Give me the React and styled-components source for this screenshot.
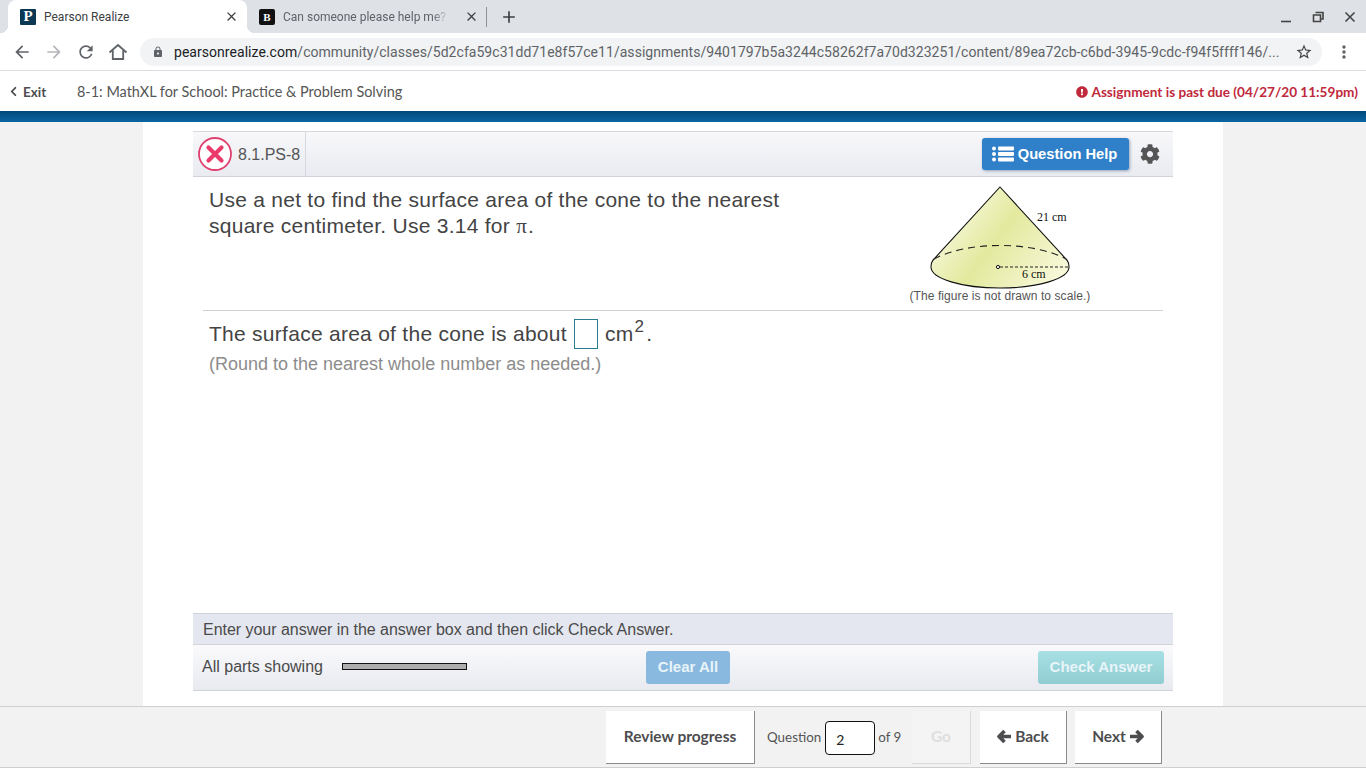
import React from 'react';
import styled, { createGlobalStyle } from 'styled-components';
import { FaChevronLeft, FaExclamationCircle, FaCog } from 'react-icons/fa';
import { MdArrowBack, MdArrowForward, MdRefresh, MdLock, MdStarBorder, MdMoreVert, MdClose, MdAdd } from 'react-icons/md';

const GlobalStyle = createGlobalStyle`
  html, body { margin: 0; padding: 0; height: 100%; overflow: hidden; }
  body { font-family: "Liberation Sans", Arial, sans-serif; background: #f2f2f2; }
  * { box-sizing: border-box; }
`;

const Page = styled.div`
  width: 1366px;
  height: 768px;
  display: flex;
  flex-direction: column;
  overflow: hidden;
`;

// Browser chrome
const TabStrip = styled.div`
  height: 33px;
  background: #dee1e6;
  display: flex;
  align-items: center;
  padding-left: 8px;
`;

const ActiveTab = styled.div`
  width: 239px;
  height: 33px;
  background: #fff;
  border-radius: 8px 8px 0 0;
  display: flex;
  align-items: center;
  padding: 0 8px 0 12px;
  font: 12px Roboto, sans-serif;
  color: #3c4043;
  position: relative;

  &::before, &::after {
    content: '';
    position: absolute;
    bottom: 0;
    width: 8px;
    height: 8px;
  }
  &::before {
    left: -8px;
    background: radial-gradient(circle at 0 0, transparent 8px, #fff 8.5px);
  }
  &::after {
    right: -8px;
    background: radial-gradient(circle at 100% 0, transparent 8px, #fff 8.5px);
  }
`;

const InactiveTab = styled.div`
  width: 239px;
  height: 33px;
  display: flex;
  align-items: center;
  padding: 0 7px 0 12px;
  font: 12px Roboto, sans-serif;
  color: #5f6368;
`;

const Favicon = styled.span`
  width: 16px;
  height: 16px;
  flex: none;
  margin-right: 8px;
  background: ${(p) => p.$bg};
  color: #fff;
  font: bold ${(p) => p.$size}px "Liberation Serif", serif;
  display: flex;
  align-items: center;
  justify-content: center;
  border-radius: ${(p) => p.$radius}px;
`;

const TabTitle = styled.span`
  flex: 1;
  white-space: nowrap;
  ${(p) => p.$fade && `
    -webkit-mask-image: linear-gradient(to right, #000 150px, transparent 166px);
    mask-image: linear-gradient(to right, #000 150px, transparent 166px);
  `}
`;

const TabClose = styled.span`
  display: flex;
  color: #3c4043;
  font-size: 15px;
  flex: none;
`;

const TabDivider = styled.span`
  width: 1px;
  height: 20px;
  background: #8f9296;
  flex: none;
`;

const NewTab = styled.span`
  display: flex;
  color: #3c4043;
  font-size: 20px;
  margin-left: 12px;
`;

const WindowControls = styled.div`
  margin-left: auto;
  height: 33px;
  display: flex;
  align-items: center;
  gap: 20px;
  padding-right: 10px;
`;

const Toolbar = styled.div`
  height: 38px;
  background: #fff;
  border-bottom: 1px solid #dadce0;
  display: flex;
  align-items: center;
  padding-left: 12px;
`;

const NavIcon = styled.span`
  display: flex;
  width: 20px;
  margin-right: 12px;
  font-size: 20px;
  color: ${(p) => (p.$off ? '#b4b6b9' : '#5f6368')};
`;

const Omnibox = styled.div`
  width: 1182px;
  height: 28px;
  border-radius: 14px;
  background: #f1f3f4;
  display: flex;
  align-items: center;
  padding: 0 9px 0 12px;
  margin-right: 12px;
  font: 14px Roboto, sans-serif;
  letter-spacing: 0.04px;
  color: #5f6368;
  white-space: nowrap;
`;

const LockSlot = styled.span`
  display: flex;
  flex: none;
  font-size: 12px;
  margin-right: 10px;
`;

const StarSlot = styled.span`
  display: flex;
  flex: none;
  font-size: 18px;
  color: #444;
  margin-left: 16px;
`;

const Domain = styled.span`
  color: #202124;
`;

const Url = styled.span`
  flex: 1;
  overflow: hidden;
`;

// Assignment bar
const ExitBar = styled.div`
  height: 40px;
  background: #fff;
  display: flex;
  align-items: center;
  padding: 1px 8px 0;
  font-family: Lato, sans-serif;
  font-size: 14.45px;
  color: #555;
`;

const ExitLink = styled.span`
  display: flex;
  align-items: center;
  gap: 4px;
  font-weight: 700;
  font-size: 13.5px;
  width: 69px;
  color: #4d4d4f;
  svg { font-size: 11px; }
`;

const PastDue = styled.span`
  margin-left: auto;
  display: flex;
  align-items: center;
  gap: 3px;
  font-weight: 700;
  font-size: 13.6px;
  color: #c0283c;
  svg { font-size: 12px; }
`;

const BlueBar = styled.div`
  height: 11px;
  background: linear-gradient(to bottom, #00487a, #0a65a2);
`;

// Main column
const Stage = styled.div`
  flex: 1;
  min-height: 0;
  background: #f2f2f2;
  display: flex;
  justify-content: center;
`;

const Column = styled.div`
  width: 1080px;
  background: #fff;
  padding: 9px 50px 15px;
  display: flex;
  flex-direction: column;
`;

const QuestionHeader = styled.div`
  height: 46px;
  flex: none;
  background: linear-gradient(to bottom, #f8f8fa, #e9ebf1);
  border-top: 1px solid #d5d8df;
  border-bottom: 1px solid #d0d3da;
  display: flex;
  align-items: center;
`;

const StatusCell = styled.div`
  width: 113px;
  height: 100%;
  display: flex;
  align-items: center;
  padding-left: 5px;
  gap: 6px;
  border-right: 1px solid #d5d8df;
  font-size: 16px;
  color: #555;
`;

const QuestionId = styled.span`
  padding-top: 1px;
`;

const HelpButton = styled.button`
  margin-left: auto;
  width: 147px;
  height: 32px;
  border: 0;
  border-radius: 3px;
  background: #2f7fc9;
  box-shadow: 1px 1px 3px rgba(60, 90, 130, 0.5);
  color: #fff;
  font: bold 14.7px "Liberation Sans", sans-serif;
  display: flex;
  align-items: center;
  justify-content: center;
  gap: 4px;
  padding: 0 2px 1px 0;
`;

const GearSlot = styled.span`
  display: flex;
  font-size: 20px;
  color: #555;
  margin: 0 13px 0 11px;
`;

const PromptRow = styled.div`
  height: 134px;
  flex: none;
  margin: 0 10px;
  padding: 10px 6px 0;
  border-bottom: 1px solid #d2d2d2;
  display: flex;
  justify-content: space-between;
`;

const Prompt = styled.div`
  width: 600px;
  font-size: 21px;
  line-height: 26px;
  letter-spacing: 0.26px;
  color: #444;
`;

const Pi = styled.span`
  font-family: "Liberation Serif", serif;
  margin-right: 1px;
`;

const Figure = styled.div`
  width: 182px;
  margin-right: 66px;
  margin-top: -2px;
  display: flex;
  flex-direction: column;
  align-items: center;
`;

const Caption = styled.div`
  font-size: 12px;
  line-height: 14px;
  letter-spacing: 0.08px;
  color: #555;
  white-space: nowrap;
`;

const AnswerArea = styled.div`
  flex: 1;
  min-height: 0;
  padding: 8px 16px 0;
`;

const AnswerLine = styled.div`
  display: flex;
  align-items: center;
  height: 30px;
  font-size: 21px;
  letter-spacing: 0.27px;
  color: #444;
  white-space: pre;
`;

const AnswerBox = styled.span`
  width: 24px;
  height: 30px;
  border: 1px solid #2d7d92;
  margin: 0 7px;
  flex: none;
`;

const Sup = styled.span`
  font-size: 17px;
  position: relative;
  top: -7px;
  margin: 0 2px 0 1px;
`;

const Hint = styled.div`
  font-size: 18px;
  line-height: 24px;
  margin-top: 3px;
  color: #8c8c8c;
`;

const InstructionBar = styled.div`
  height: 32px;
  flex: none;
  background: #e4e7ef;
  border-top: 1px solid #d0d3da;
  border-bottom: 1px solid #d0d3da;
  display: flex;
  align-items: center;
  padding: 1px 0 0 10px;
  font-size: 16px;
  letter-spacing: -0.03px;
  color: #4a4a4a;
`;

const ActionBar = styled.div`
  height: 46px;
  flex: none;
  background: linear-gradient(to bottom, #fafafc, #e8eaf0);
  border-bottom: 1px solid #d0d3da;
  display: flex;
  align-items: center;
  padding: 0 9px;
  font-size: 16px;
  color: #4a4a4a;
`;

const PartsLabel = styled.span`
  width: 140px;
  margin-top: -2px;
`;

const PartsMeter = styled.span`
  width: 125px;
  height: 7px;
  background: #aeaeae;
  border: 1px solid #111;
  margin: -2px 179px 0 0;
`;

const ActionButton = styled.button`
  height: 33px;
  width: ${(p) => p.$w}px;
  margin-left: ${(p) => (p.$end ? 'auto' : '0')};
  border: 0;
  border-radius: 3px;
  padding: 0 0 2px;
  color: #e8f4f8;
  font: bold 15px "Liberation Sans", sans-serif;
  background: ${(p) => p.$bg};
`;

// Bottom navigation
const BottomBar = styled.div`
  height: 62px;
  flex: none;
  background: #f2f2f2;
  border-top: 1px solid #cfcfcf;
  border-bottom: 1px solid #cfcfcf;
  display: flex;
  align-items: flex-start;
  padding: 4px 0 0 606px;
  font-family: Lato, sans-serif;
`;

const NavButton = styled.div`
  width: ${(p) => p.$w}px;
  height: 53px;
  margin-right: ${(p) => p.$gap || 0}px;
  padding-bottom: 2px;
  background: ${(p) => (p.$muted ? '#f4f4f4' : '#fff')};
  border-right: 1px solid ${(p) => (p.$muted ? '#d8d8d8' : '#8a8a8a')};
  border-bottom: 1px solid ${(p) => (p.$muted ? '#d8d8d8' : '#8a8a8a')};
  display: flex;
  align-items: center;
  justify-content: center;
  gap: 3px;
  font-size: 15.5px;
  font-weight: 700;
  color: ${(p) => (p.$muted ? '#dedede' : '#4d4d4f')};
`;

const QuestionPicker = styled.div`
  width: 157px;
  height: 53px;
  display: flex;
  align-items: center;
  padding: 0 0 2px 12px;
  font-size: 13.4px;
  color: #555;
`;

const PickerInput = styled.span`
  width: 50px;
  height: 34px;
  margin: 3px 3px 0 4px;
  border: 1px solid #111;
  border-radius: 4px;
  background: #fff;
  color: #222;
  font-size: 14px;
  display: flex;
  align-items: center;
  padding: 3px 0 0 10px;
`;

function Cone() {
  return (
    <svg width="142" height="104" viewBox="0 0 142 104">
      <defs>
        <linearGradient id="coneFill" x1="0" y1="0.2" x2="1" y2="0.75">
          <stop offset="0" stopColor="#fcfdee" />
          <stop offset="0.5" stopColor="#e3e99e" />
          <stop offset="1" stopColor="#f7f8d8" />
        </linearGradient>
      </defs>
      <path
        d="M71 2 L137 74 C139 76 140 79 140 82 A69 21 0 0 1 2 82 C2 79 3 76 5 74 Z"
        fill="url(#coneFill)"
        stroke="#111"
        strokeWidth="1.1"
      />
      <path d="M5 74 C38 56 104 56 137 74" fill="none" stroke="#222" strokeWidth="1.1" strokeDasharray="7 5" />
      <path d="M71 82 H140" stroke="#222" strokeWidth="1" strokeDasharray="3 2" />
      <circle cx="69" cy="82" r="1.6" fill="#fff" stroke="#111" />
      <text x="108" y="36" fontFamily="Liberation Serif, serif" fontSize="12" fill="#111">21 cm</text>
      <text x="93" y="93" fontFamily="Liberation Serif, serif" fontSize="12" fill="#111">6 cm</text>
    </svg>
  );
}

function WrongMark() {
  return (
    <svg width="34" height="34" viewBox="0 0 34 34">
      <circle cx="17" cy="17" r="16" fill="#fff" stroke="#e0406f" strokeWidth="1.8" />
      <path d="M10.5 10.5 L23.5 23.5 M23.5 10.5 L10.5 23.5" stroke="#ea3a6c" strokeWidth="4.2" strokeLinecap="round" />
    </svg>
  );
}

function ListGlyph() {
  return (
    <svg width="22" height="16" viewBox="0 0 22 16" fill="#fff">
      <circle cx="2" cy="2.5" r="2" />
      <circle cx="2" cy="8" r="2" />
      <circle cx="2" cy="13.5" r="2" />
      <rect x="6" y="0.6" width="16" height="3.8" rx="0.8" />
      <rect x="6" y="6.1" width="16" height="3.8" rx="0.8" />
      <rect x="6" y="11.6" width="16" height="3.8" rx="0.8" />
    </svg>
  );
}

function HomeGlyph() {
  return (
    <svg width="20" height="20" viewBox="0 0 20 20" fill="none" stroke="#5f6368" strokeWidth="1.8">
      <path d="M1.5 10.5 L10 3 L18.5 10.5 M4.8 8.5 V17 H15.2 V8.5" />
    </svg>
  );
}

function BoldArrow({ flip }) {
  return (
    <svg width="15" height="15" viewBox="0 0 15 15" fill="none" stroke="#4d4d4f" strokeWidth="3.6" strokeLinejoin="round">
      <path d={flip ? 'M7.5 2 L13 7.5 L7.5 13 M13 7.5 H1' : 'M7.5 2 L2 7.5 L7.5 13 M2 7.5 H14'} />
    </svg>
  );
}

export default function App() {
  return (
    <Page>
      <GlobalStyle />
      <TabStrip>
        <ActiveTab>
          <Favicon $bg="#0b3954" $size={15} $radius={1}>P</Favicon>
          <TabTitle>Pearson Realize</TabTitle>
          <TabClose><MdClose /></TabClose>
        </ActiveTab>
        <InactiveTab>
          <Favicon $bg="#111" $size={11} $radius={2}>B</Favicon>
          <TabTitle $fade>Can someone please help me? If</TabTitle>
          <TabClose><MdClose /></TabClose>
        </InactiveTab>
        <TabDivider />
        <NewTab><MdAdd /></NewTab>
        <WindowControls>
          <svg width="12" height="12" viewBox="0 0 12 12"><path d="M1 10.5 H11" stroke="#444" strokeWidth="1.6" /></svg>
          <svg width="12" height="12" viewBox="0 0 12 12"><path d="M3.5 1.5 H11 V8 H8.5 M1.5 4 H8.5 V10.5 H1.5 Z" fill="none" stroke="#444" strokeWidth="1.6" /></svg>
          <svg width="12" height="12" viewBox="0 0 12 12"><path d="M1.5 1.5 L10.5 10.5 M10.5 1.5 L1.5 10.5" stroke="#444" strokeWidth="1.6" /></svg>
        </WindowControls>
      </TabStrip>

      <Toolbar>
        <NavIcon><MdArrowBack /></NavIcon>
        <NavIcon $off><MdArrowForward /></NavIcon>
        <NavIcon><MdRefresh /></NavIcon>
        <NavIcon><HomeGlyph /></NavIcon>
        <Omnibox>
          <LockSlot><MdLock /></LockSlot>
          <Url><Domain>pearsonrealize.com</Domain>/community/classes/5d2cfa59c31dd71e8f57ce11/assignments/9401797b5a3244c58262f7a70d323251/content/89ea72cb-c6bd-3945-9cdc-f94f5ffff146/...</Url>
          <StarSlot><MdStarBorder /></StarSlot>
        </Omnibox>
        <NavIcon><MdMoreVert /></NavIcon>
      </Toolbar>

      <ExitBar>
        <ExitLink><FaChevronLeft />Exit</ExitLink>
        <span>8-1: MathXL for School: Practice &amp; Problem Solving</span>
        <PastDue><FaExclamationCircle />Assignment is past due (04/27/20 11:59pm)</PastDue>
      </ExitBar>
      <BlueBar />

      <Stage>
        <Column>
          <QuestionHeader>
            <StatusCell><WrongMark /><QuestionId>8.1.PS-8</QuestionId></StatusCell>
            <HelpButton><ListGlyph />Question Help</HelpButton>
            <GearSlot><FaCog /></GearSlot>
          </QuestionHeader>

          <PromptRow>
            <Prompt>Use a net to find the surface area of the cone to the nearest square centimeter. Use 3.14 for <Pi>π</Pi>.</Prompt>
            <Figure>
              <Cone />
              <Caption>(The figure is not drawn to scale.)</Caption>
            </Figure>
          </PromptRow>

          <AnswerArea>
            <AnswerLine>The surface area of the cone is about<AnswerBox />cm<Sup>2</Sup>.</AnswerLine>
            <Hint>(Round to the nearest whole number as needed.)</Hint>
          </AnswerArea>

          <InstructionBar>Enter your answer in the answer box and then click Check Answer.</InstructionBar>
          <ActionBar>
            <PartsLabel>All parts showing</PartsLabel>
            <PartsMeter />
            <ActionButton $w={84} $bg="#8ab9e0">Clear All</ActionButton>
            <ActionButton $w={126} $end $bg="linear-gradient(to bottom, #a8e0e4, #90cdd2)">Check Answer</ActionButton>
          </ActionBar>
        </Column>
      </Stage>

      <BottomBar>
        <NavButton $w={149}>Review progress</NavButton>
        <QuestionPicker>
          Question<PickerInput>2</PickerInput>of 9
        </QuestionPicker>
        <NavButton $w={59} $muted $gap={9}>Go</NavButton>
        <NavButton $w={87} $gap={8}><BoldArrow />Back</NavButton>
        <NavButton $w={87}>Next<BoldArrow flip /></NavButton>
      </BottomBar>
    </Page>
  );
}
